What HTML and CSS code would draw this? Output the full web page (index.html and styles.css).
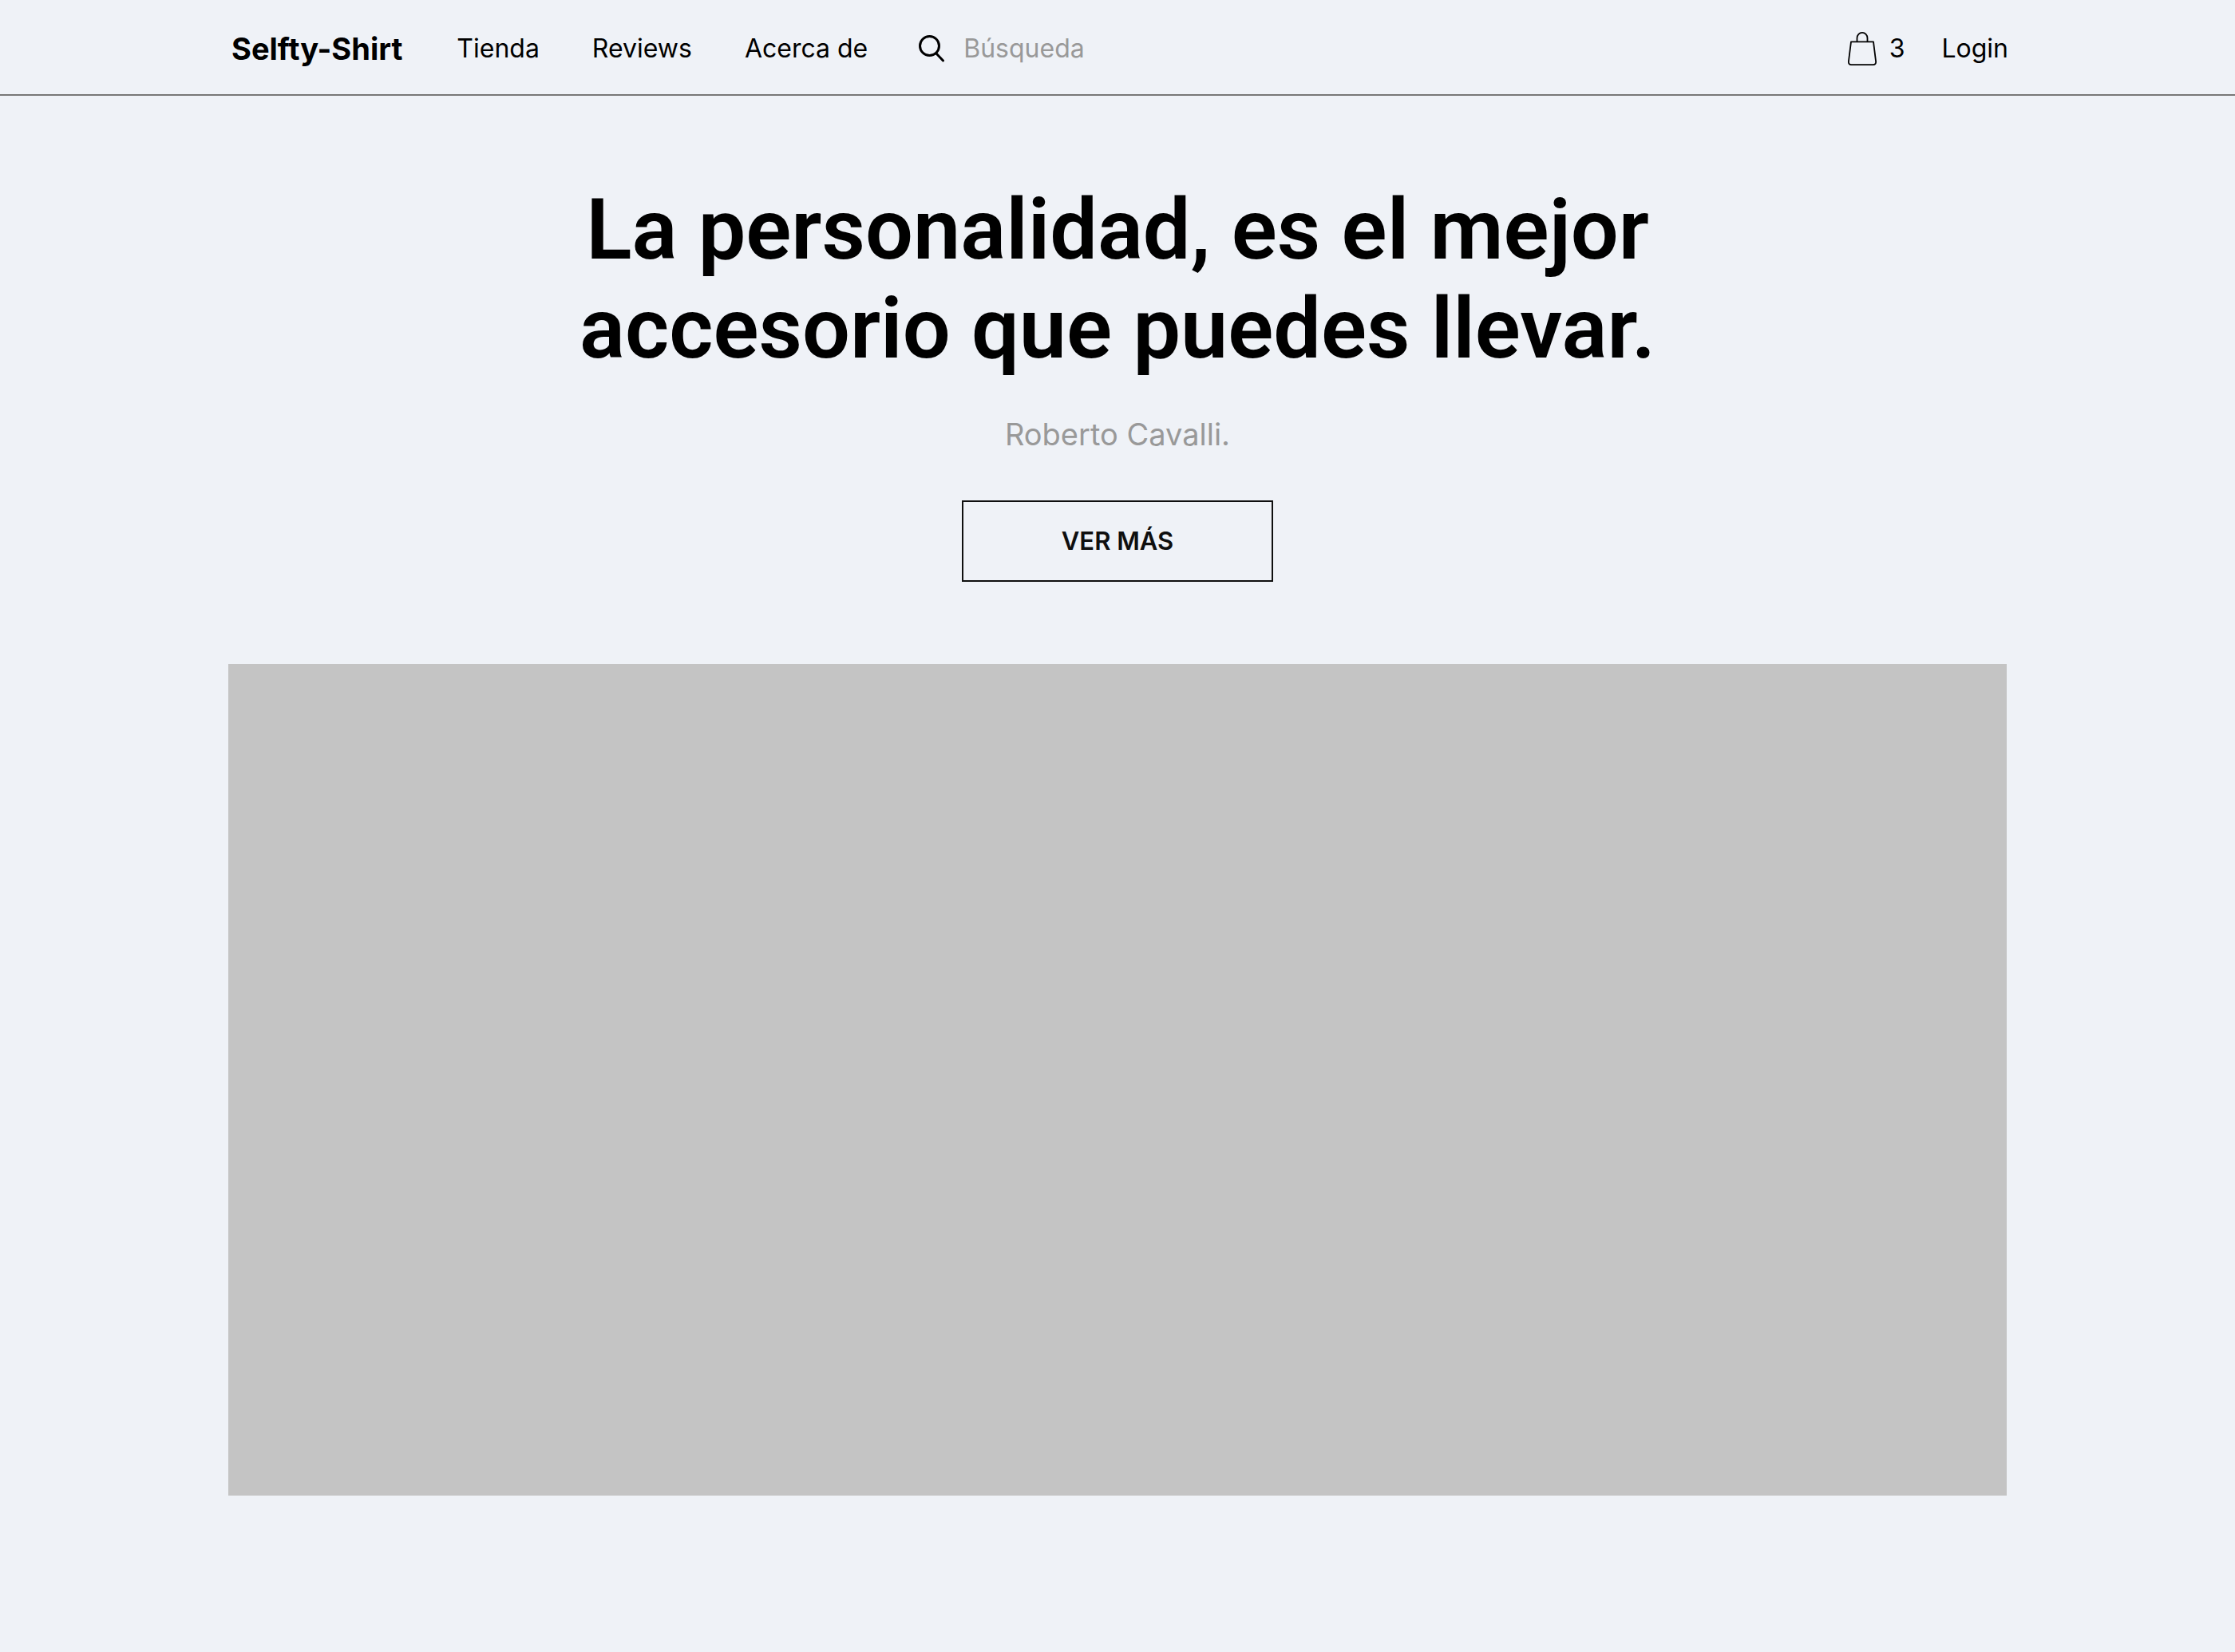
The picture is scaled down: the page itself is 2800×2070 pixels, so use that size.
FILE: index.html
```html
<!DOCTYPE html>
<html lang="es">
<head>
<meta charset="utf-8">
<meta name="viewport" content="width=device-width, initial-scale=1">
<title>Selfty-Shirt</title>
<link rel="stylesheet" href="styles.css">
</head>
<body>
<header class="site-header">
  <div class="header-row">
    <a class="brand" href="#">Selfty-Shirt</a>
    <nav class="nav">
      <a href="#tienda">Tienda</a>
      <a href="#reviews">Reviews</a>
      <a href="#acerca">Acerca de</a>
    </nav>
    <form class="search" role="search">
      <label for="q" aria-label="Búsqueda">
        <svg class="search-icon" viewBox="0 0 32 34" fill="none" stroke="#000" stroke-width="3" stroke-linecap="round"><circle cx="13.5" cy="13.5" r="12"/><path d="M22 23l8.5 9"/></svg>
      </label>
      <input id="q" type="search" placeholder="Búsqueda">
    </form>
    <div class="account">
      <a class="cart" href="#carrito" aria-label="Carrito: 3">
        <svg class="cart-icon" viewBox="0 0 36 42" fill="none" stroke="#000" stroke-width="1.8" stroke-linejoin="round"><path d="M4 12.4H32L35.1 37.2Q35.3 41.1 31.6 41.1H4.4Q.7 41.1.9 37.2Z"/><path d="M11.5 12.4V7.7a6.5 6.8 0 0 1 13 0V12.4"/></svg>
        <span>3</span>
      </a>
      <a href="#login">Login</a>
    </div>
  </div>
</header>
<main class="hero">
  <h1 class="hero-title">La personalidad, es el mejor<br>accesorio que puedes llevar.</h1>
  <p class="hero-author">Roberto Cavalli.</p>
  <button class="hero-button" type="button">VER MÁS</button>
  <div class="hero-image"></div>
</main>
</body>
</html>
```
FILE: styles.css
```css
* {
  box-sizing: border-box;
}

body {
  margin: 0;
  background: #eff2f7;
  color: #000;
  font-family: Inter, "Liberation Sans", sans-serif;
  font-size: 32px;
  line-height: 40px;
}

a {
  color: inherit;
  text-decoration: none;
}

.site-header {
  border-bottom: 2px solid #777;
}

.header-row {
  display: flex;
  align-items: center;
  gap: 64px;
  max-width: 2232px;
  min-height: 118px;
  margin: 0 auto;
  padding-top: 4px;
  padding-left: 6px;
}

.brand {
  font-size: 38px;
  font-weight: 700;
}

.nav {
  display: flex;
  gap: 66px;
  margin-left: 4px;
}

.search {
  display: flex;
  flex: 1;
  align-items: center;
  gap: 24px;
}

.search label,
.cart {
  display: flex;
  align-items: center;
}

.search-icon {
  width: 32px;
  height: 34px;
}

.search input {
  flex: 1;
  min-width: 0;
  padding: 0;
  border: 0;
  outline: 0;
  background: transparent;
  color: #000;
  font: inherit;
}

.search input::placeholder {
  color: #999;
  opacity: 1;
}

.account {
  display: flex;
  align-items: center;
  gap: 46px;
}

.cart {
  gap: 16px;
}

.cart-icon {
  width: 36px;
  height: 42px;
}

.hero {
  display: flex;
  flex-direction: column;
  align-items: center;
  max-width: 2228px;
  margin: 0 auto;
  padding: 106px 0 64px;
}

.hero-title {
  margin: 0;
  font-family: Roboto, Inter, sans-serif;
  font-size: 106px;
  font-weight: 600;
  line-height: 124px;
  text-align: center;
}

.hero-author {
  margin: 46px 0 0;
  color: #999;
  font-size: 38px;
  line-height: 48px;
}

.hero-button {
  width: 390px;
  height: 102px;
  margin: 59px 0 0;
  border: 2px solid #0f0f0f;
  background: transparent;
  color: #0f0f0f;
  font: 600 31px/40px Inter, "Liberation Sans", sans-serif;
}

.hero-image {
  width: 100%;
  aspect-ratio: 2228 / 1042;
  margin-top: 103px;
  background: #c4c4c4;
}
```
